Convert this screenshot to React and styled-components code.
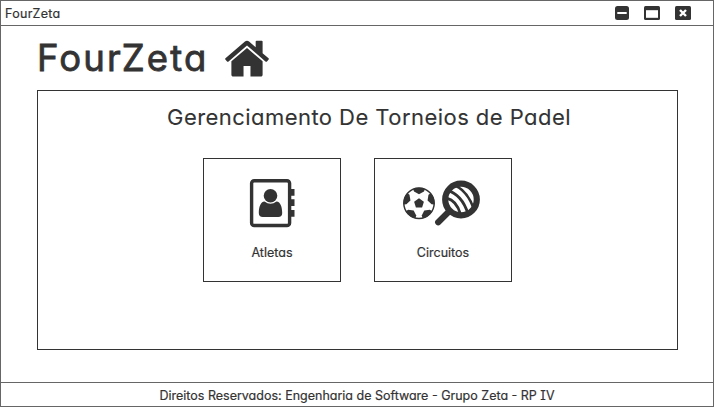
import React from "react";
import styled, { createGlobalStyle } from "styled-components";

const INK = "#333333";

const GlobalStyle = createGlobalStyle`
  *, *::before, *::after { box-sizing: border-box; }
  body {
    margin: 0;
    background: #fff;
    color: ${INK};
    font-family: Inter, "Liberation Sans", sans-serif;
    font-feature-settings: "cv11", "cv08", "kern";
  }
  svg { display: block; flex: none; }
`;

const Window = styled.div`
  width: 714px;
  height: 407px;
  display: flex;
  flex-direction: column;
  border: 1px solid #666;
  overflow: hidden;
  background: #fff;
`;

const TitleBar = styled.header`
  flex: none;
  height: 25px;
  display: flex;
  align-items: center;
  justify-content: space-between;
  padding: 0 22px 0 4px;
  border-bottom: 1px solid #666;
`;

const Label = styled.span`
  padding-top: 2px;
  font-size: 12.5px;
  line-height: 16px;
  white-space: nowrap;
  letter-spacing: ${(p) => p.$tracking || "0"};
  -webkit-text-stroke: 0.2px ${INK};
`;

const Controls = styled.div`
  display: flex;
  align-items: center;
  gap: 15px;
`;

const Content = styled.main`
  flex: 1;
  display: flex;
  flex-direction: column;
  padding: 0 35px 0 36px;
`;

const Brand = styled.div`
  height: 64px;
  display: flex;
  align-items: flex-start;
  gap: 20px;

  svg { margin-top: 14px; }
`;

const BrandName = styled.h1`
  margin: 9px 0 0;
  width: 168px;
  font-size: 36.5px;
  line-height: 46px;
  font-weight: 400;
  letter-spacing: 2.15px;
  white-space: nowrap;
  -webkit-text-stroke: 0.8px ${INK};
`;

const Panel = styled.section`
  height: 260px;
  display: flex;
  flex-direction: column;
  align-items: center;
  border: 1px solid ${INK};
`;

const Heading = styled.h2`
  margin: 12px 0 0 23px;
  font-size: 22px;
  line-height: 28px;
  font-weight: 400;
  letter-spacing: 0.45px;
  white-space: nowrap;
  -webkit-text-stroke: 0.1px ${INK};
`;

const Cards = styled.div`
  display: flex;
  gap: 33px;
  margin-top: 27px;
`;

const Card = styled.a`
  width: 138px;
  height: 124px;
  display: flex;
  flex-direction: column;
  align-items: center;
  gap: 15px;
  padding-top: 19px;
  border: 1px solid ${INK};
`;

const Footer = styled.footer`
  flex: none;
  height: 24px;
  display: flex;
  align-items: center;
  justify-content: center;
  border-top: 1px solid #666;
`;

const HomeIcon = () => (
  <svg width="44" height="37" viewBox="84 226 1624 1324" preserveAspectRatio="none" fill={INK}>
    <path d="M1472 992v480q0 26-19 45t-45 19h-384v-384h-256v384h-384q-26 0-45-19t-19-45v-480q0-1 .5-3t.5-3l575-474 575 474q1 2 1 6zm223-69l-62 74q-8 9-21 11h-3q-13 0-21-7l-692-577-692 577q-12 8-24 7-13-2-21-11l-62-74q-8-10-7-23.5t11-21.5l719-599q32-26 76-26t76 26l244 204v-195q0-14 9-23t23-9h192q14 0 23 9t9 23v408l219 182q10 8 11 21.5t-7 23.5z" />
  </svg>
);

const MinimizeIcon = () => (
  <svg width="14" height="14" viewBox="0 0 14 14">
    <rect width="14" height="14" rx="2.5" fill={INK} />
    <rect x="2.3" y="6" width="9.4" height="2" fill="#fff" />
  </svg>
);

const MaximizeIcon = () => (
  <svg width="16" height="14" viewBox="0 0 16 14">
    <rect width="16" height="14" rx="1.5" fill={INK} />
    <rect x="2" y="4.2" width="12" height="7.6" fill="#fff" />
  </svg>
);

const CloseIcon = () => (
  <svg width="16" height="14" viewBox="0 0 16 14">
    <rect width="16" height="14" rx="1.5" fill={INK} />
    <path d="M5 4l6 6M11 4l-6 6" stroke="#fff" strokeWidth="2.4" />
  </svg>
);

const AddressBookIcon = () => (
  <svg width="46" height="50" viewBox="249 178 46 50" fill={INK}>
    <rect x="251.6" y="180.7" width="38" height="44.8" rx="2.6" fill="none" stroke={INK} strokeWidth="3.4" />
    <path d="M290 189h4.5v6.7H290zM290 199.3h4.5v6.7H290zM290 210h4.5v6.7H290z" />
    <ellipse cx="270.5" cy="195.8" rx="6.8" ry="6.8" />
    <path d="M264.5 201.5q6 4.5 12 0c4 .4 5.7 5.5 5.7 11.5q0 4-4 4h-15.4q-4 0-4-4c0-6 1.7-11.1 5.7-11.5z" />
  </svg>
);

const patchAngles = [0, 72, 144, 216, 288];

const SportsIcon = () => (
  <svg width="80" height="50" viewBox="403 178 80 50">
    <defs>
      <clipPath id="ball"><circle cx="419" cy="203.2" r="15.5" /></clipPath>
      <clipPath id="strings"><circle cx="461" cy="199.5" r="13.8" /></clipPath>
    </defs>
    <g clipPath="url(#ball)" fill={INK}>
      <path d="M419 198.3l4.9 3.5-1.8 5.6h-6.2l-1.8-5.6z" />
      {patchAngles.map((a) => (
        <path key={a} transform={`rotate(${a} 419 203.2)`} d="M412 186h14l-2 5.6-5 2.600-5-2.600z" />
      ))}
    </g>
    <circle cx="419" cy="203.2" r="15.2" fill="none" stroke={INK} strokeWidth="1.5" />
    <g clipPath="url(#strings)" fill="none" stroke={INK}>
      <path d="M452 184Q468 190 474 210" strokeWidth="2.6" />
      <path d="M446 190Q462 194 468 214" strokeWidth="2.8" />
      <path d="M446 198Q457 200 461 216" strokeWidth="2.8" />
    </g>
    <circle cx="461" cy="199.5" r="15.8" fill="none" stroke={INK} strokeWidth="6.2" />
    <path d="M449 211.5L438.2 222.2" stroke={INK} strokeWidth="6.2" strokeLinecap="round" />
  </svg>
);

export default function App() {
  return (
    <>
      <GlobalStyle />
      <Window>
        <TitleBar>
          <Label $tracking="0.35px">FourZeta</Label>
          <Controls>
            <MinimizeIcon />
            <MaximizeIcon />
            <CloseIcon />
          </Controls>
        </TitleBar>
        <Content>
          <Brand>
            <BrandName>FourZeta</BrandName>
            <HomeIcon />
          </Brand>
          <Panel>
            <Heading>Gerenciamento De Torneios de Padel</Heading>
            <Cards>
              <Card>
                <AddressBookIcon />
                <Label>Atletas</Label>
              </Card>
              <Card>
                <SportsIcon />
                <Label>Circuitos</Label>
              </Card>
            </Cards>
          </Panel>
        </Content>
        <Footer>
          <Label>Direitos Reservados: Engenharia de Software - Grupo Zeta - RP IV</Label>
        </Footer>
      </Window>
    </>
  );
}
